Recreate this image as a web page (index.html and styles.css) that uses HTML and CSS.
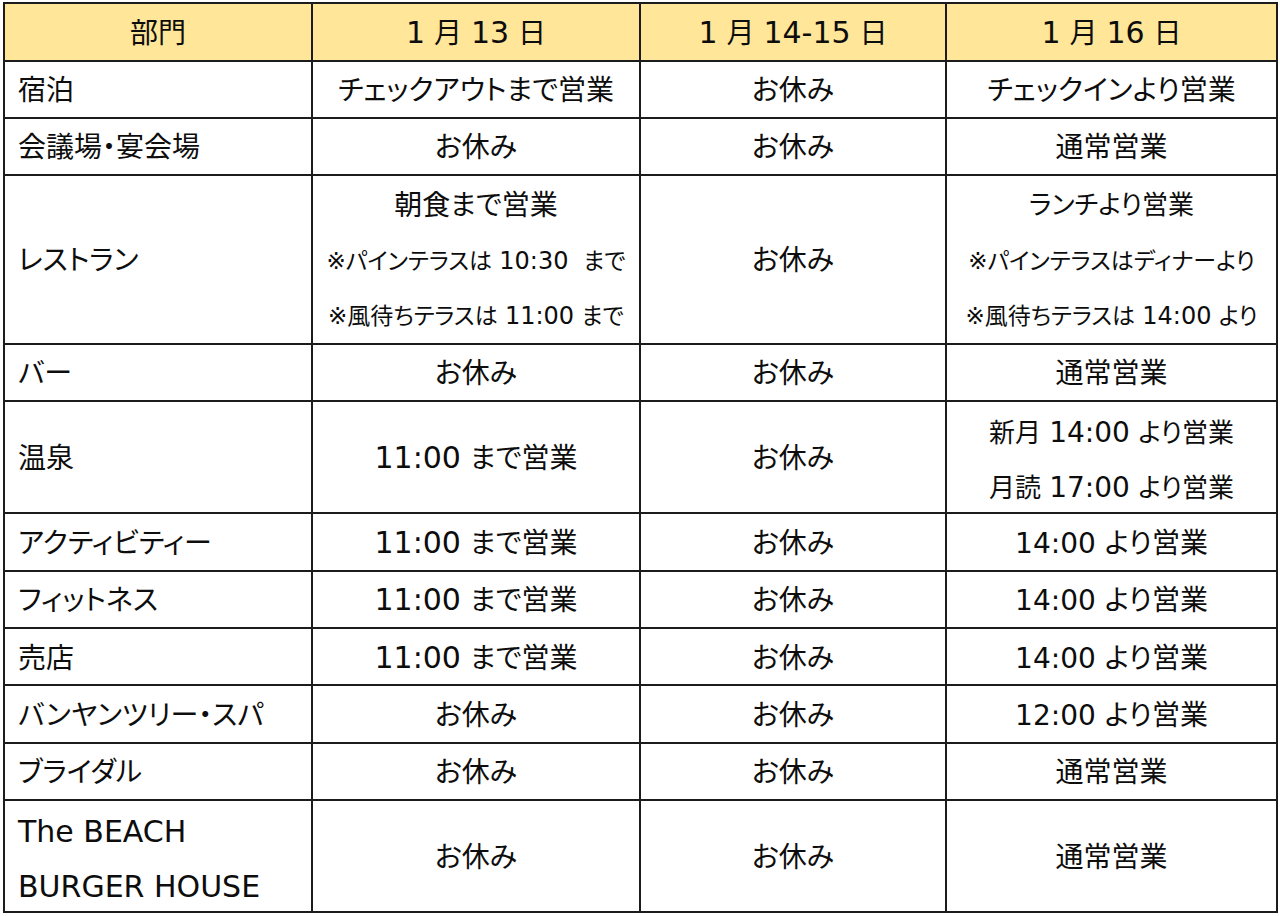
FILE: index.html
```html
<!DOCTYPE html>
<html lang="ja">
<head>
<meta charset="utf-8">
<title>営業案内</title>
<link rel="stylesheet" href="styles.css">
</head>
<body>
<table class="schedule">
  <colgroup>
    <col class="c1"><col class="c2"><col class="c3"><col class="c4">
  </colgroup>
  <thead>
    <tr class="row-head">
      <th>部門</th>
      <th><span class="lat">1</span> 月 <span class="lat">13</span> 日</th>
      <th><span class="lat">1</span> 月 <span class="lat">14-15</span> 日</th>
      <th><span class="lat">1</span> 月 <span class="lat">16</span> 日</th>
    </tr>
  </thead>
  <tbody>
    <tr class="r1">
      <td class="dept">宿泊</td>
      <td>チェックアウトまで営業</td>
      <td>お休み</td>
      <td>チェックインより営業</td>
    </tr>
    <tr class="r1">
      <td class="dept">会議場・宴会場</td>
      <td>お休み</td>
      <td>お休み</td>
      <td>通常営業</td>
    </tr>
    <tr class="r3">
      <td class="dept">レストラン</td>
      <td class="multi">
        <div class="line">朝食まで営業</div>
        <div class="line note">※パインテラスは <span class="lat">10:30</span>&nbsp; まで</div>
        <div class="line note">※風待ちテラスは <span class="lat">11:00</span> まで</div>
      </td>
      <td>お休み</td>
      <td class="multi">
        <div class="line mid">ランチより営業</div>
        <div class="line note">※パインテラスはディナーより</div>
        <div class="line note">※風待ちテラスは <span class="lat">14:00</span> より</div>
      </td>
    </tr>
    <tr class="r1">
      <td class="dept">バー</td>
      <td>お休み</td>
      <td>お休み</td>
      <td>通常営業</td>
    </tr>
    <tr class="r2">
      <td class="dept">温泉</td>
      <td><span class="lat">11:00</span> まで営業</td>
      <td>お休み</td>
      <td class="multi">
        <div class="line mid">新月 <span class="lat">14:00</span> より営業</div>
        <div class="line mid">月読 <span class="lat">17:00</span> より営業</div>
      </td>
    </tr>
    <tr class="r1">
      <td class="dept">アクティビティー</td>
      <td><span class="lat">11:00</span> まで営業</td>
      <td>お休み</td>
      <td class="from"><span class="lat">14:00</span> より営業</td>
    </tr>
    <tr class="r1">
      <td class="dept">フィットネス</td>
      <td><span class="lat">11:00</span> まで営業</td>
      <td>お休み</td>
      <td class="from"><span class="lat">14:00</span> より営業</td>
    </tr>
    <tr class="r1">
      <td class="dept">売店</td>
      <td><span class="lat">11:00</span> まで営業</td>
      <td>お休み</td>
      <td class="from"><span class="lat">14:00</span> より営業</td>
    </tr>
    <tr class="r1">
      <td class="dept">バンヤンツリー・スパ</td>
      <td>お休み</td>
      <td>お休み</td>
      <td class="from"><span class="lat">12:00</span> より営業</td>
    </tr>
    <tr class="r1">
      <td class="dept">ブライダル</td>
      <td>お休み</td>
      <td>お休み</td>
      <td>通常営業</td>
    </tr>
    <tr class="r2">
      <td class="dept multi">
        <div class="line"><span class="lat">The BEACH</span></div>
        <div class="line"><span class="lat">BURGER HOUSE</span></div>
      </td>
      <td>お休み</td>
      <td>お休み</td>
      <td>通常営業</td>
    </tr>
  </tbody>
</table>
</body>
</html>
```

FILE: styles.css
```css
html, body {
  margin: 0;
  padding: 0;
  background: #ffffff;
}

body {
  font-family: "DejaVu Sans", "Noto Sans CJK JP", sans-serif;
  color: #0d0d0d;
  font-feature-settings: "palt";
}

.schedule {
  border-collapse: collapse;
  table-layout: fixed;
  margin: 2px 0 0 3px;
  width: 1273px;
}

.c1 { width: 308px; }
.c2 { width: 328px; }
.c3 { width: 306px; }
.c4 { width: 331px; }

.schedule th,
.schedule td {
  border: 2px solid #1c1c1c;
  padding: 4px 0 0;
  text-align: center;
  vertical-align: middle;
  font-size: 28px;
  font-weight: normal;
  line-height: 40px;
  white-space: nowrap;
}

.schedule td.multi {
  padding-top: 0;
}

.schedule th {
  background: #ffe699;
}

.row-head { height: 57.5px; }
.r1 { height: 57.3px; }
.r2 { height: 112.5px; }
.r3 { height: 168.5px; }

.schedule td.dept {
  text-align: left;
  padding-left: 13px;
}

.lat {
  font-size: 30px;
  line-height: 1;
}

.schedule td.from .lat {
  font-size: 28px;
}

.line {
  box-sizing: border-box;
  height: 55px;
  line-height: 55px;
  padding-top: 4px;
}

.r3 .line {
  height: 55.5px;
  line-height: 55.5px;
  padding-top: 2px;
}

.line.note {
  font-size: 23px;
}

.line.note .lat {
  font-size: 24px;
}

.line.mid {
  font-size: 26px;
}

.line.mid .lat {
  font-size: 28px;
}
```
